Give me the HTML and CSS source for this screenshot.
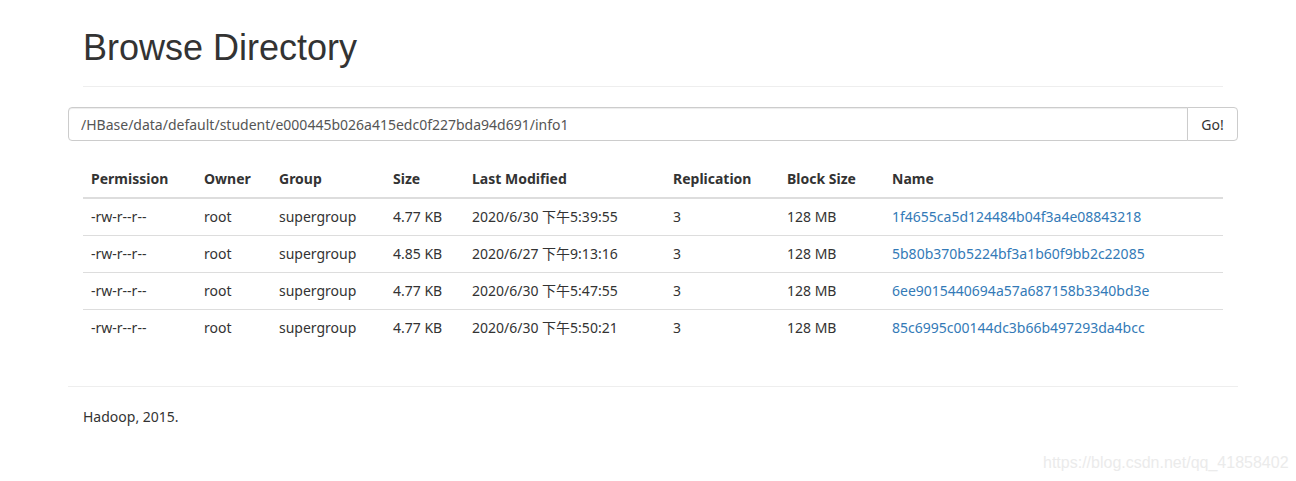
FILE: index.html
```html
<!DOCTYPE html>
<html lang="en">
<head>
<meta charset="utf-8">
<title>Browsing HDFS</title>
<link rel="stylesheet" href="styles.css">
</head>
<body>
<div class="container">
  <div class="page-header">
    <h1>Browse Directory</h1>
  </div>
  <form class="input-group">
    <input class="form-control" type="text" value="/HBase/data/default/student/e000445b026a415edc0f227bda94d691/info1">
    <button class="btn" type="button">Go!</button>
  </form>
  <table class="table">
    <colgroup>
      <col class="c-perm"><col class="c-owner"><col class="c-group"><col class="c-size"><col class="c-mod"><col class="c-rep"><col class="c-block"><col class="c-name">
    </colgroup>
    <thead>
      <tr><th>Permission</th><th>Owner</th><th>Group</th><th>Size</th><th>Last Modified</th><th>Replication</th><th>Block Size</th><th>Name</th></tr>
    </thead>
    <tbody>
      <tr><td>-rw-r--r--</td><td>root</td><td>supergroup</td><td>4.77 KB</td><td>2020/6/30 下午5:39:55</td><td>3</td><td>128 MB</td><td><a href="#">1f4655ca5d124484b04f3a4e08843218</a></td></tr>
      <tr><td>-rw-r--r--</td><td>root</td><td>supergroup</td><td>4.85 KB</td><td>2020/6/27 下午9:13:16</td><td>3</td><td>128 MB</td><td><a href="#">5b80b370b5224bf3a1b60f9bb2c22085</a></td></tr>
      <tr><td>-rw-r--r--</td><td>root</td><td>supergroup</td><td>4.77 KB</td><td>2020/6/30 下午5:47:55</td><td>3</td><td>128 MB</td><td><a href="#">6ee9015440694a57a687158b3340bd3e</a></td></tr>
      <tr><td>-rw-r--r--</td><td>root</td><td>supergroup</td><td>4.77 KB</td><td>2020/6/30 下午5:50:21</td><td>3</td><td>128 MB</td><td><a href="#">85c6995c00144dc3b66b497293da4bcc</a></td></tr>
    </tbody>
  </table>
  <hr class="footer-rule">
  <div class="footer">Hadoop, 2015.</div>
</div>
<div class="watermark">https://blog.csdn.net/qq_41858402</div>
</body>
</html>
```
FILE: styles.css
```css
html, body {
  margin: 0;
  padding: 0;
  background: #fff;
}
body {
  font-family: "Noto Sans", "Noto Sans CJK SC", sans-serif;
  font-size: 14px;
  line-height: 20px;
  color: #333;
}
.container {
  width: 1170px;
  margin-left: 68px;
}
.page-header {
  margin: 28px 15px 20px;
  padding-bottom: 18px;
  border-bottom: 1px solid #eee;
}
.page-header h1 {
  margin: 0;
  font-family: "Liberation Sans", Arial, sans-serif;
  font-size: 36px;
  font-weight: 400;
  line-height: 40px;
  color: #333;
}
.input-group {
  display: flex;
  margin: 0;
  height: 34px;
}
.form-control {
  flex: 1;
  min-width: 0;
  height: 34px;
  box-sizing: border-box;
  padding: 6px 12px;
  border: 1px solid #ccc;
  border-radius: 4px 0 0 4px;
  font-family: "Noto Sans", "Noto Sans CJK SC", sans-serif;
  font-size: 14px;
  color: #555;
  box-shadow: inset 0 1px 1px rgba(0,0,0,.075);
  outline: none;
}
.btn {
  width: 51px;
  height: 34px;
  box-sizing: border-box;
  margin-left: -1px;
  padding: 6px 0;
  border: 1px solid #ccc;
  border-radius: 0 4px 4px 0;
  background: #fff;
  font-family: "Noto Sans", "Noto Sans CJK SC", sans-serif;
  font-size: 14px;
  color: #333;
}
.table {
  width: 1140px;
  margin: 20px 15px 20px;
  border-collapse: collapse;
  table-layout: fixed;
}
.c-perm { width: 113px; }
.c-owner { width: 75px; }
.c-group { width: 114px; }
.c-size { width: 79px; }
.c-mod { width: 201px; }
.c-rep { width: 114px; }
.c-block { width: 105px; }
.c-name { width: 339px; }
.table th, .table td {
  padding: 8px;
  text-align: left;
  vertical-align: top;
  line-height: 20px;
  white-space: nowrap;
}
.table th {
  font-weight: 700;
  border-bottom: 2px solid #ddd;
}
.table td {
  border-top: 1px solid #ddd;
}
.table tbody tr:first-child td {
  border-top: 0;
}
.table a {
  color: #337ab7;
  text-decoration: none;
}
.footer-rule {
  margin: 40px 0 20px;
  border: 0;
  border-top: 1px solid #eee;
}
.footer {
  padding: 0 15px;
}
.watermark {
  position: absolute;
  left: 1043px;
  top: 453px;
  font-family: "Liberation Sans", Arial, sans-serif;
  font-size: 16px;
  line-height: 20px;
  color: #ebebeb;
}
```
